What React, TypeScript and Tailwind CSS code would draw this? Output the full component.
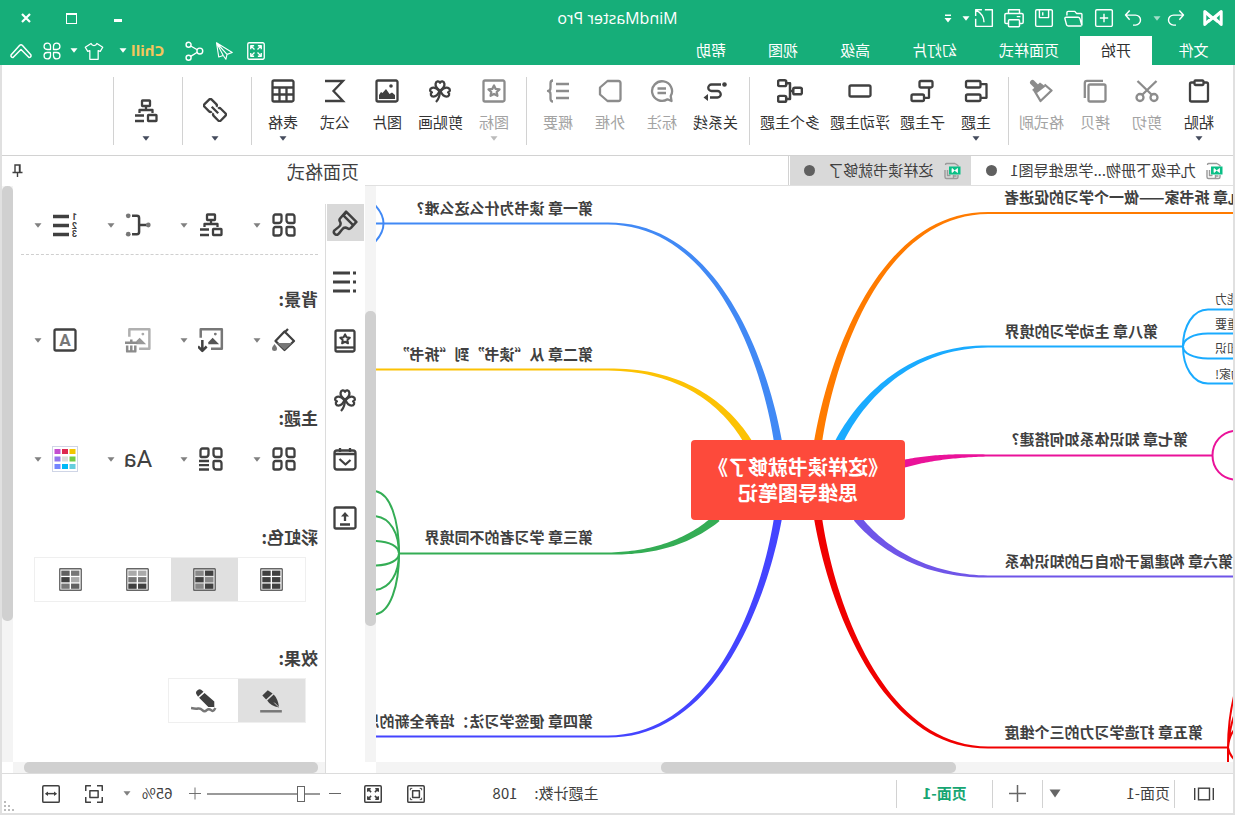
import type { ReactNode } from "react";

/* ---------- icon primitives ---------- */

function Svg({ size = 24, sw = 2.3, children }: { size?: number; sw?: number; children: ReactNode }) {
  return (
    <svg
      width={size}
      height={size}
      viewBox="0 0 24 24"
      fill="none"
      stroke="currentColor"
      strokeWidth={sw}
      strokeLinejoin="round"
      className="shrink-0"
      aria-hidden="true"
    >
      {children}
    </svg>
  );
}

function Caret({ className = "" }: { className?: string }) {
  return (
    <svg width="8" height="5" viewBox="0 0 8 5" fill="currentColor" className={`shrink-0 ${className}`} aria-hidden="true">
      <path d="M0.500 0.300h7L4 4.700z" />
    </svg>
  );
}

const star = "M12 6.500l1.700 3.400 3.800.5-2.800 2.600.7 3.800-3.400-1.800-3.400 1.800.7-3.800-2.800-2.600 3.800-.5z";
const heart = "M12 11.600C8.600 9.200 7.200 7 7.600 4.700 8.100 2 10.900 1.500 12 3.800 13.100 1.500 15.900 2 16.400 4.700 16.800 7 15.400 9.200 12 11.600z";
const leaf = "M3.500 1.500h5q1 0 1 1v4.500q0 3-3 3H2.500q-1 0-1-1V4Q1.500 1.500 3.500 1.500z";

const icons = {
  paste: (
    <Svg>
      <path d="M7 3.500H4.500q-1.500 0-1.500 1.500v16q0 1.500 1.500 1.500h15q1.500 0 1.500-1.500V5q0-1.500-1.500-1.500H17" />
      <rect x="7.500" y="1.500" width="9" height="4.500" rx="1" />
    </Svg>
  ),
  cut: (
    <Svg>
      <circle cx="5" cy="18.500" r="3.500" />
      <circle cx="19" cy="18.500" r="3.500" />
      <path d="M2.500 2L17 16M21.500 2L7 16" />
    </Svg>
  ),
  copy: (
    <Svg>
      <rect x="1.500" y="5.500" width="17" height="17" rx="1.500" />
      <path d="M4 1.800h16q2.200 0 2.200 2.200v15" />
    </Svg>
  ),
  painter: (
    <Svg>
      <path d="M19 11l-6.500 11L1.500 11.500l7-6" />
      <path d="M7.500 7.500L13 3.500l8 7.500-5 3z" fill="currentColor" stroke="none" />
      <path d="M16.500 7.500l4-4" strokeWidth="5" strokeLinecap="round" />
    </Svg>
  ),
  topic: (
    <Svg>
      <rect x="7.500" y="2" width="14.500" height="6.500" rx="1.500" />
      <rect x="7.500" y="15.500" width="14.500" height="6.500" rx="1.500" />
      <path d="M7.500 5.200H1.500v13.600h6" />
    </Svg>
  ),
  subtopic: (
    <Svg>
      <rect x="1.500" y="2" width="13" height="6.500" rx="1.500" />
      <rect x="10" y="15.500" width="12.500" height="6.500" rx="1.500" />
      <path d="M5 8.500v10.300h5" />
    </Svg>
  ),
  floating: (
    <Svg>
      <rect x="1.500" y="6.500" width="21" height="11" rx="1.500" />
    </Svg>
  ),
  multi: (
    <Svg size={26}>
      <rect x="1" y="9" width="8" height="6" rx="1.500" />
      <rect x="15.500" y="2" width="7.500" height="5.500" rx="1.500" />
      <rect x="15.500" y="16.500" width="7.500" height="5.500" rx="1.500" />
      <path d="M9 12h3M15.500 4.800H12v14.500h3.500" />
    </Svg>
  ),
  relation: (
    <Svg>
      <path d="M6 5.500h9.500a3.200 3.200 0 0 1 0 6.500h-6a3.200 3.200 0 0 0 0 6.500H17" />
      <circle cx="2.500" cy="5.500" r="2.300" fill="currentColor" stroke="none" />
      <path d="M19 15l4.500 3.500-4.500 3.500z" fill="currentColor" stroke="none" />
    </Svg>
  ),
  callout: (
    <Svg>
      <path d="M6.500 20.300L2.500 22l.8-5A10 9.800 0 1 1 6.500 20.300z" />
      <path d="M8 9.500h8.500M8 14h8.500" />
    </Svg>
  ),
  boundary: (
    <Svg>
      <path d="M3.500 2h11l7.500 6.500v7L14.500 22h-11Q1.500 22 1.500 20V4q0-2 2-2z" />
    </Svg>
  ),
  summary: (
    <Svg>
      <path d="M1 5h13M1 12h13M1 19h13" />
      <path d="M17 1.500c2.500 0 2.500 1.500 2.500 3v4c0 2 .8 3.500 2.500 3.500-1.700 0-2.500 1.500-2.500 3.500v4c0 1.500 0 3-2.500 3" />
    </Svg>
  ),
  mark: (
    <Svg>
      <rect x="1.500" y="1.500" width="21" height="21" rx="1.500" />
      <path d={star} />
    </Svg>
  ),
  clover: (
    <Svg>
      <path d={heart} />
      <path d={heart} transform="rotate(-100 12 12)" />
      <path d={heart} transform="rotate(100 12 12)" />
      <path d="M12 11c0 5 1 9 4 12" />
    </Svg>
  ),
  image: (
    <Svg>
      <rect x="1.500" y="1.500" width="21" height="21" rx="1.500" />
      <path d="M4 20v-4l3-2.500 2.500 1.500 3.500-5 3.500 4 1.500-1 2 3v4z" fill="currentColor" stroke="none" />
      <circle cx="8" cy="7" r="1.800" fill="currentColor" stroke="none" />
    </Svg>
  ),
  formula: (
    <Svg>
      <path d="M22 2H4L13.500 12 4 22h18" strokeLinejoin="miter" />
    </Svg>
  ),
  table: (
    <Svg>
      <rect x="1.500" y="1.500" width="21" height="21" rx="1.500" />
      <path d="M1.500 8.500h21M1.500 15.500h21M8.500 8.500v14M15.500 8.500v14" />
    </Svg>
  ),
  link: (
    <Svg size={24} sw={2.500}>
      <g transform="translate(1 1) scale(0.920) rotate(-45 12 12)">
        <path d="M10.500 15.500q0 2-2 2H1.500q-2 0-2-2v-7q0-2 2-2h7q2 0 2 2" />
        <path d="M13.500 8.500q0-2 2-2h7q2 0 2 2v7q0 2-2 2h-7q-2 0-2-2" />
        <path d="M7 12h10" />
      </g>
    </Svg>
  ),
  org: (
    <Svg>
      <rect x="8" y="1.500" width="8" height="5.500" rx="0.500" />
      <path d="M12 7v3.500M5.500 14v-3h13v3" />
      <rect x="1.500" y="16" width="8.500" height="6" rx="0.500" />
      <path d="M14 16.500h9M14 22h9" />
    </Svg>
  ),
  brush: (
    <Svg size={26}>
      <path d="M11 1.500L1.500 11l5 5.500q1.500 1.500 3 .5c2.200-1.300 4-.6 5.200 1l3 3.800a2.500 2.500 0 0 0 4-3l-4-3.200c-1.600-1.300-2.200-3-1-5q1-1.500-.3-3z" />
      <path d="M4.500 14L14 4.500M10.500 2l3 3" />
    </Svg>
  ),
  list: (
    <Svg>
      <path d="M7 3h17M7 12h17M7 21h17" strokeWidth="3.200" />
      <path d="M1 3h3M1 12h3M1 21h3" strokeWidth="3.200" />
    </Svg>
  ),
  book: (
    <Svg>
      <rect x="2.500" y="1.500" width="19" height="21" rx="1.500" />
      <path d="M2.500 18.500h19" />
      <path d={star} transform="translate(1.500 -0.300) scale(0.870)" />
    </Svg>
  ),
  calendar: (
    <Svg>
      <rect x="1.500" y="3.500" width="21" height="19" rx="2.500" />
      <path d="M1.500 7h21M7 1v4M17 1v4M6.500 13l5 4.500 6-5.500" />
    </Svg>
  ),
  upload: (
    <Svg>
      <rect x="1.500" y="1.500" width="21" height="21" rx="1.500" />
      <path d="M12 8v7M7 18.500h10" />
      <path d="M8 10.500L12 6l4 4.500z" fill="currentColor" stroke="none" />
    </Svg>
  ),
  leaves: (
    <Svg>
      <path d={leaf} />
      <path d={leaf} transform="matrix(-1 0 0 1 24 0)" />
      <path d={leaf} transform="translate(0 12.500)" />
      <path d={leaf} transform="matrix(-1 0 0 1 24 12.500)" />
    </Svg>
  ),
  leavesList: (
    <Svg>
      <path d={leaf} />
      <path d={leaf} transform="matrix(-1 0 0 1 24 0)" />
      <path d={leaf} transform="translate(0 12.500)" />
      <path d="M14 14h10M14 18.200h10M14 22.500h10" />
    </Svg>
  ),
  branch: (
    <Svg size={26}>
      <path d="M4 12h7M17.500 3.500H13q-2 0-2 2v13q0 2 2 2h4.500" />
      <g fill="#777" stroke="none">
        <circle cx="2.500" cy="12" r="2.200" />
        <circle cx="21" cy="3.500" r="2.200" />
        <circle cx="21" cy="20.500" r="2.200" />
      </g>
    </Svg>
  ),
  numbered: (
    <Svg>
      <path d="M8 3.500h16M8 12.500h16M8 21.500h16" strokeWidth="3.500" />
      <g fill="currentColor" stroke="none" fontSize="9" fontWeight="700" fontFamily="Roboto, sans-serif">
        <text x="0" y="6.500">1</text>
        <text x="0" y="15.500">2</text>
        <text x="0" y="24">3</text>
      </g>
    </Svg>
  ),
  bucket: (
    <Svg>
      <path d="M8 1l3.500 3.500M11.500 3.500L2 13l9.500 9 9-9z" />
      <path d="M4 15l7.500 7 7.500-7z" fill="#777" stroke="none" />
      <path d="M21.500 16q-2.500 3-2.500 4.500a2.500 2.500 0 0 0 5 0q0-1.500-2.500-4.500z" fill="#777" stroke="none" />
    </Svg>
  ),
  imageDown: (
    <Svg size={26}>
      <path d="M12 20H2V2h19.500v8" stroke="#777" />
      <path d="M4.500 16l6-6 4 4v2z" fill="#555" stroke="none" />
      <circle cx="8" cy="6.500" r="1.300" fill="#777" stroke="none" />
      <path d="M20 12v10M16 18l4 4 4-4" />
    </Svg>
  ),
  imageTrash: (
    <Svg size={26}>
      <path d="M11 20H1.500V2H20v7" stroke="#b0b0b0" />
      <path d="M4.500 16l6-6 3 3v3z" fill="#999" stroke="none" />
      <circle cx="7.500" cy="6.500" r="1.300" fill="#aaa" stroke="none" />
      <path d="M12.500 14.500h11.500M18.200 11.500v2M14.500 17v5.500h7.500V17M18.200 17v5" stroke="#8c8c8c" />
    </Svg>
  ),
  letter: (
    <Svg>
      <rect x="1.500" y="1.500" width="21" height="21" rx="1.500" />
      <text x="12" y="18" textAnchor="middle" fontSize="17" fontWeight="700" fontFamily="Roboto, sans-serif" fill="#777" stroke="none">A</text>
    </Svg>
  ),
  pen: (
    <Svg size={26}>
      <path d="M15 2l5 5-3.500 3.500-6-5.500z" fill="currentColor" stroke="none" />
      <path d="M9.500 6l6 5.500q-3 5-11 6.500 1-8 5-12z" fill="currentColor" stroke="none" />
      <path d="M4.500 18l4.500-4.500" stroke="#e0e0e0" strokeWidth="0.800" />
      <path d="M2 21.500h20" stroke="#777" />
    </Svg>
  ),
  pencil: (
    <Svg size={26}>
      <path d="M13.500 2.500a3 3 0 0 1 5 4L17.500 8 12.500 3.500zM11.500 4.500l5 4.500L8 17.500H2.500v-5z" fill="currentColor" stroke="none" />
      <path d="M1.500 18.500q2 4 4 2t4 0 4 0 4-1.500 6.500-.5" stroke="#777" />
    </Svg>
  ),
};

/* ---------- title bar ---------- */

function Tool({ label, className = "", children }: { label: string; className?: string; children: ReactNode }) {
  return (
    <button type="button" aria-label={label} className={`flex shrink-0 items-center justify-center ${className}`}>
      {children}
    </button>
  );
}

function TitleBar() {
  return (
    <div className="grid h-9 grid-cols-[1fr_auto_1fr] items-center">
      <div className="flex h-full items-center pl-3">
        <svg width="20" height="18" viewBox="0 0 20 18" fill="none" stroke="white" strokeWidth="3" strokeLinejoin="round" aria-hidden="true">
          <path d="M1.800 2.500v13L8.500 9zM18.200 2.500v13L11.500 9z" />
          <path d="M2 2.500l13 10.500M18 2.500L5 13" strokeWidth="2.500" />
        </svg>
        <Tool label="撤销" className="ml-[17px] w-5">
          <Svg size={20} sw={1.700}><path d="M8 3L3 8.500 8 14M3.500 8.500H15a6 6 0 0 1 0 12h-3" /></Svg>
        </Tool>
        <Caret className="ml-[5px] opacity-60" />
        <Tool label="恢复" className="ml-[10px] w-5">
          <Svg size={20} sw={1.700}><path d="M16 3l5 5.500-5 5.500M20.500 8.500H9a6 6 0 0 0 0 12h3" /></Svg>
        </Tool>
        <div className="ml-[9px] flex items-center gap-[10px]">
          <Tool label="新建" className="w-5">
            <Svg size={20} sw={1.700}><rect x="2" y="2" width="20" height="20" rx="1.500" /><path d="M12 7v10M7 12h10" /></Svg>
          </Tool>
          <Tool label="打开" className="w-5">
            <Svg size={20} sw={1.700}><path d="M2.500 21V7.500q0-1 1-1H9L11 4h8q1.500 0 1.500 1.500V9M2.500 21L5 12.500Q5.500 11 7 11h14.500q1.500 0 1.500 1.500L21 20q-.3 1.500-2 1.500H3" /></Svg>
          </Tool>
          <Tool label="保存" className="w-5">
            <Svg size={20} sw={1.700}><rect x="2" y="2" width="20" height="20" rx="1.500" /><path d="M6.500 2v9.500h11V2M13.500 5v4" /></Svg>
          </Tool>
          <Tool label="打印" className="w-5">
            <Svg size={22} sw={1.600}><path d="M6 7V3h12v4M6 18H3.500Q2 18 2 16.500v-8Q2 7 3.500 7h17Q22 7 22 8.500v8q0 1.500-1.500 1.500H18M5 10.500h4" /><rect x="6" y="14" width="12" height="7.500" rx="1" /></Svg>
          </Tool>
          <Tool label="导出" className="w-5">
            <Svg size={20} sw={1.700}><path d="M11 2H2v20h20V13M12 17C12 10 15 6 21.500 2.500M14.500 2H22v7.500" /></Svg>
          </Tool>
        </div>
        <Caret className="ml-1" />
        <svg width="8" height="9" viewBox="0 0 8 9" fill="currentColor" className="ml-[10px]" aria-hidden="true">
          <path d="M1 0.500h6v1.500H1zM0.500 4h7L4 8.500z" />
        </svg>
      </div>
      <h1 className="font-['Open_Sans',sans-serif] text-[16px]">MindMaster Pro</h1>
      <div className="flex h-full items-center justify-end pr-[3px]">
        <Tool label="最小化" className="h-8 w-[46px] pt-1"><span className="h-[3px] w-2 bg-white" /></Tool>
        <Tool label="最大化" className="h-8 w-[46px]"><span className="size-[11px] border border-t-2 border-white" /></Tool>
        <Tool label="关闭" className="h-8 w-[46px]">
          <svg width="10" height="10" viewBox="0 0 10 10" stroke="white" strokeWidth="2.200" aria-hidden="true"><path d="M1 1l8 8M9 1L1 9" /></svg>
        </Tool>
      </div>
    </div>
  );
}

const menus = ["页面样式", "幻灯片", "高级", "视图", "帮助"];

function MenuBar() {
  return (
    <div className="flex h-[29px] text-[15px]">
      <nav className="flex">
        <button type="button" className="w-[83px]">文件</button>
        <button type="button" aria-current="page" className="bg-white px-[21px] text-[#303030]">开始</button>
        {menus.map((m) => (
          <button type="button" key={m} className="px-[21px]">{m}</button>
        ))}
      </nav>
      <div className="ml-auto flex items-center pr-[10px]">
        <Tool label="全屏" className="mr-[14px]">
          <Svg size={18} sw={1.800}><rect x="1" y="1" width="22" height="22" rx="2" /><path d="M10 10L5.500 5.500M5 9.500V5h4.500M14 10l4.500-4.500M14.500 5H19v4.500M10 14l-4.500 4.500M5 14.500V19h4.500M14 14l4.500 4.500M14.500 19H19v-4.500" /></Svg>
        </Tool>
        <Tool label="发送" className="mr-[11px]">
          <Svg size={18} sw={1.500}><path d="M22 1L1 14l7 2.500L9.500 23l3.500-5 6 2zM22 1L8 16.500M22 1l-9 17" /></Svg>
        </Tool>
        <Tool label="分享" className="mr-5">
          <Svg size={20} sw={1.700}><circle cx="5" cy="12" r="3.500" /><circle cx="18.500" cy="4.500" r="3" /><circle cx="18.500" cy="20" r="3" /><path d="M8 10.500l8-4.500M8 13.500l8 5" /></Svg>
        </Tool>
        <button type="button" className="flex items-center gap-1">
          <span className="font-['Open_Sans',sans-serif] text-[15px] font-bold text-[#f6c65b]">Chill</span>
          <Caret />
        </button>
        <Tool label="皮肤" className="ml-[15px] gap-[6px]">
          <Svg size={20} sw={1.500}><path d="M8.500 3L1.500 7.500l3 5L7 11.500V22h10V11.500l2.500 1 3-5L15.500 3q-1 2.500-3.500 2.500T8.500 3z" /></Svg>
          <Caret />
        </Tool>
        <Tool label="应用" className="ml-[9px]">
          <Svg size={18} sw={1.700}>
            <path d="M10 10H5.500A4.300 4.300 0 1 1 10 5.500zM14 10h4.500A4.300 4.300 0 1 0 14 5.500zM10 14H5.500A4.300 4.300 0 1 0 10 18.500zM14 14h4.500A4.300 4.300 0 1 1 14 18.500z" />
          </Svg>
        </Tool>
        <Tool label="收起功能区" className="ml-[11px]">
          <svg width="22" height="16" viewBox="0 0 22 16" fill="none" stroke="white" strokeWidth="1.500" strokeLinejoin="round" strokeLinecap="round" aria-hidden="true">
            <path d="M1 12L9.500 2.500q1.500-1.500 3 0L21 12q.3 2.500-2 2.500L11 6.500 3 14.500Q.7 14.500 1 12z" />
          </svg>
        </Tool>
      </div>
    </div>
  );
}

/* ---------- ribbon ---------- */

type RibbonEntry = { label: string; icon: ReactNode; off?: boolean; drop?: boolean };

const ribbon: { pad: string; items: RibbonEntry[] }[] = [
  {
    pad: "pl-2 pr-[5px]",
    items: [
      { label: "粘贴", icon: icons.paste, drop: true },
      { label: "剪切", icon: icons.cut, off: true },
      { label: "拷贝", icon: icons.copy, off: true },
      { label: "格式刷", icon: icons.painter, off: true },
    ],
  },
  {
    pad: "pl-[6px] pr-[5px]",
    items: [
      { label: "主题", icon: icons.topic, drop: true },
      { label: "子主题", icon: icons.subtopic },
      { label: "浮动主题", icon: icons.floating },
      { label: "多个主题", icon: icons.multi },
    ],
  },
  {
    pad: "pl-[6px] pr-[5px]",
    items: [
      { label: "关系线", icon: icons.relation },
      { label: "标注", icon: icons.callout, off: true },
      { label: "外框", icon: icons.boundary, off: true },
      { label: "概要", icon: icons.summary, off: true },
    ],
  },
  {
    pad: "pl-[6px] pr-[5px]",
    items: [
      { label: "图标", icon: icons.mark, off: true, drop: true },
      { label: "剪贴画", icon: icons.clover },
      { label: "图片", icon: icons.image },
      { label: "公式", icon: icons.formula },
      { label: "表格", icon: icons.table, drop: true },
    ],
  },
];

function Ribbon() {
  return (
    <div className="flex h-[91px] border-b border-[#d2d2d2] pt-3 pb-[10px]">
      {ribbon.map((group, i) => (
        <div key={i} className={`flex border-r border-[#d2d2d2] ${group.pad}`}>
          {group.items.map((it) => (
            <button
              type="button"
              key={it.label}
              disabled={it.off}
              className={`flex min-w-[52px] flex-col items-center px-[5px] pt-[2px] ${it.off ? "text-[#8c8c8c]" : "text-[#404040]"}`}
            >
              <span className="flex h-6 items-center">{it.icon}</span>
              <span className={`mt-[7px] text-[15px] leading-6 whitespace-nowrap ${it.off ? "text-[#a3a3a3]" : "text-[#333]"}`}>{it.label}</span>
              {it.drop && <Caret className={it.off ? "mt-[2px] text-[#bbb]" : "mt-[2px] text-[#444b5c]"} />}
            </button>
          ))}
        </div>
      ))}
      <button type="button" aria-label="超链接" className="flex w-[69px] flex-col items-center border-r border-[#d2d2d2] pt-[21px] pl-1 text-[#404040]">
        {icons.link}
        <Caret className="mt-[14px] text-[#444b5c]" />
      </button>
      <button type="button" aria-label="布局" className="flex w-[69px] flex-col items-center border-r border-[#d2d2d2] pt-[22px] pl-1 text-[#404040]">
        {icons.org}
        <Caret className="mt-[13px] text-[#444b5c]" />
      </button>
    </div>
  );
}

/* ---------- documents ---------- */

function DocIcon() {
  return (
    <svg width="18" height="18" viewBox="0 0 18 18" fill="none" className="shrink-0" aria-hidden="true">
      <path d="M6 1.500h8.500q1 0 1 1.500M3 4.500v-1L6 1.500M16 8v7q0 1.500-1.500 1.500h-10q-1.500 0-1.500-1.500v-2M13.500 8v5.500h-3M7.500 13v3M4.500 14h3" stroke="#9a9a9a" strokeWidth="1.400" />
      <rect x="0.500" y="4.500" width="11.500" height="8" fill="#0abf86" />
      <path d="M3.500 6.500v4l2.500-2zM9 6.500v4l-2.500-2z" fill="#fff" stroke="#fff" strokeWidth="0.800" />
    </svg>
  );
}

function DocTabs() {
  return (
    <div className="flex h-[30px] border-b border-[#e0e0e0] text-[15px] text-[#404040]">
      <button type="button" className="flex items-center pr-[15px] pl-[10px]">
        <DocIcon />
        <span className="ml-[9px]">九年级下册物...学思维导图1</span>
        <span className="ml-[13px] size-[11px] rounded-full bg-[#606060]" />
      </button>
      <button type="button" aria-current="page" className="flex items-center bg-[#d9d9d9] pr-[14px] pl-[10px]">
        <DocIcon />
        <span className="ml-[10px]">这样读书就够了</span>
        <span className="ml-[13px] size-[11px] rounded-full bg-[#606060]" />
      </button>
      <span className="ml-px w-px bg-[#d2d2d2]" />
    </div>
  );
}

/* ---------- mind map ---------- */

type Pt = [number, number];
type Branch = { color: string; p: [Pt, Pt, Pt, Pt]; to: number };

const branches: Branch[] = [
  { color: "#ff7b00", p: [[415, 256], [402, 174], [353, 27], [245, 27]], to: -10 },
  { color: "#1aabff", p: [[394, 256], [375, 218], [328, 160.5], [245, 160.5]], to: 50 },
  { color: "#ea1299", p: [[332, 278.5], [305, 271.5], [278, 269.5], [245, 269.5]], to: 20 },
  { color: "#6f55e8", p: [[376, 332], [352, 362], [308, 390.5], [245, 390.5]], to: -10 },
  { color: "#f00000", p: [[415, 332], [402, 414], [353, 561.5], [245, 561.5]], to: 5 },
  { color: "#4189f5", p: [[455, 256], [468, 177], [516, 37.5], [625, 37.5]], to: 2000 },
  { color: "#fcc204", p: [[485, 256], [503, 226], [543, 183.5], [625, 183.5]], to: 2000 },
  { color: "#34ad55", p: [[516, 332], [543, 355], [578, 367.5], [625, 367.5]], to: 834 },
  { color: "#4444ff", p: [[455, 332], [468, 409], [516, 550.5], [625, 550.5]], to: 2000 },
];

/* Outline of a cubic curve whose width runs from 8px down to 2px. */
function taper([a, b, c, d]: [Pt, Pt, Pt, Pt]) {
  const left: string[] = [];
  const right: string[] = [];
  const n = 40;
  for (let i = 0; i <= n; i++) {
    const t = i / n;
    const s = 1 - t;
    const at = (k: 0 | 1) => s * s * s * a[k] + 3 * s * s * t * b[k] + 3 * s * t * t * c[k] + t * t * t * d[k];
    const dt = (k: 0 | 1) => 3 * s * s * (b[k] - a[k]) + 6 * s * t * (c[k] - b[k]) + 3 * t * t * (d[k] - c[k]);
    const len = Math.hypot(dt(0), dt(1)) || 1;
    const h = 4 - 3 * t;
    const nx = (-dt(1) / len) * h;
    const ny = (dt(0) / len) * h;
    left.push(`${(at(0) + nx).toFixed(2)} ${(at(1) + ny).toFixed(2)}`);
    right.unshift(`${(at(0) - nx).toFixed(2)} ${(at(1) - ny).toFixed(2)}`);
  }
  return `M${left.join("L")}L${right.join("L")}Z`;
}

const greenEnds = [305, 330, 355, 379.5, 404, 428.5];
const blueEnds = [123.5, 147.5, 172.5, 197.5];

const topics = [
  { text: "第九章 拆书家——做一个学习的促进者", x: -25, y: 11 },
  { text: "第八章 主动学习的境界", x: 75, y: 145 },
  { text: "第七章 知识体系如何搭建?", x: 45, y: 253 },
  { text: "第六章 构建属于你自己的知识体系", x: 0, y: 375 },
  { text: "第五章 打造学习力的三个维度", x: 30, y: 546 },
  { text: "第一章 读书为什么这么难?", x: 640, y: 22 },
  { text: "第二章 从“读书”到“拆书”", x: 640, y: 168 },
  { text: "第三章 学习者的不同境界", x: 640, y: 351 },
  { text: "第四章 便签学习法：培养全新的思维", x: 640, y: 535 },
];

const notes = [
  { text: "学习能力", y: 113 },
  { text: "更重要", y: 138 },
  { text: "用知识", y: 162 },
  { text: "成功家!", y: 188 },
];

function MindMap() {
  return (
    <div className="relative min-w-0 flex-1 overflow-hidden bg-white">
      <svg className="absolute inset-0 size-full" fill="none" strokeWidth="2" aria-hidden="true">
        {branches.map((b) => (
          <g key={b.color}>
            <path d={taper(b.p)} fill={b.color} />
            <path d={`M${b.p[3][0]} ${b.p[3][1]}H${b.to}`} stroke={b.color} />
          </g>
        ))}
        {greenEnds.map((y) => (
          <path key={y} d={`M834 367.500C834 ${(367.5 + y) / 2} 842 ${y} 860 ${y}`} stroke="#34ad55" />
        ))}
        {blueEnds.map((y) => (
          <path key={y} d={`M50 160.500C50 ${160.5 + (y - 160.5) * 0.55} 40 ${y} 25 ${y}H-5`} stroke="#1aabff" />
        ))}
        <path d="M-4 244.500C12 245.500 20.500 257 20.500 269.500S12 293 -4 294" stroke="#ea1299" />
        <path d="M859 18C853 24 849.500 30 849.500 37.500S853 51 859 57" stroke="#4189f5" />
        <path d="M-1 510Q5 535 5 561.500M-1 530Q3.500 543 5 561.500M-1 544Q4 550 5 561.500V580M5 561.500Q4 568 -1 573" stroke="#f00000" />
      </svg>
      {topics.map((t) => (
        <span
          key={t.text}
          className="absolute -translate-y-1/2 text-[15px] leading-6 font-bold whitespace-nowrap text-[#404040]"
          style={{ left: t.x, top: t.y }}
        >
          {t.text}
        </span>
      ))}
      {notes.map((t) => (
        <span
          key={t.text}
          className="absolute -left-12 w-[66px] -translate-y-1/2 text-right text-[12px] leading-4 whitespace-nowrap text-[#404040]"
          style={{ top: t.y }}
        >
          {t.text}
        </span>
      ))}
      <div className="absolute top-[254px] left-[328px] flex h-20 w-[214px] items-center justify-center rounded bg-[#fd4a3b] text-center text-[20px] leading-[26px] font-bold text-white">
        <p>
          《这样读书就够了》
          <br />
          思维导图笔记
        </p>
      </div>
    </div>
  );
}

function ScrollBar({ vertical, start, length }: { vertical?: boolean; start: number; length: number }) {
  return vertical ? (
    <div className="w-[11px] shrink-0 bg-[#f4f4f4]">
      <div style={{ height: `${start}%` }} />
      <div className="rounded-[5px] bg-[#d0d0d0]" style={{ height: `${length}%` }} />
    </div>
  ) : (
    <div className="flex h-[11px] flex-1 bg-[#f4f4f4]">
      <div style={{ width: `${start}%` }} />
      <div className="rounded-[5px] bg-[#d0d0d0]" style={{ width: `${length}%` }} />
    </div>
  );
}

/* ---------- format panel ---------- */

function Swatches({ rows, on }: { rows: [string, string][]; on?: boolean }) {
  return (
    <svg width="23" height="23" viewBox="0 0 22 22" aria-hidden="true">
      <rect x="0.700" y="0.700" width="20.600" height="20.600" rx="0.500" fill={on ? "#e0e0e0" : "#fff"} stroke="#666" strokeWidth="1.300" />
      {rows.map(([a, b], i) => (
        <g key={i}>
          <rect x="2.500" y={2.5 + i * 6.2} width="8" height="5" fill={a} />
          <rect x="11.800" y={2.5 + i * 6.2} width="8" height="5" fill={b} />
        </g>
      ))}
    </svg>
  );
}

const palette = ["#f2c500", "#dd2850", "#c44fd0", "#74cc44", "#dcdcdc", "#9277ec", "#66cede", "#00b9f7", "#7486ff"];

const paletteIcon = (
  <svg width="26" height="26" viewBox="0 0 26 26" className="shrink-0" aria-hidden="true">
    <rect x="0.500" y="0.500" width="25" height="25" fill="#fff" stroke="#cfd5e6" />
    {palette.map((c, i) => (
      <rect key={c} x={2.5 + (i % 3) * 7.5} y={3 + Math.floor(i / 3) * 7.5} width="6" height="5" fill={c} />
    ))}
  </svg>
);

const fontIcon = <span className="font-[Roboto,sans-serif] text-[24px] leading-none">Aa</span>;

type Cell = { label: string; icon: ReactNode; drop?: boolean };

function IconRow({ cells }: { cells: Cell[] }) {
  return (
    <div className="flex h-9 pl-[22px] text-[#404040]">
      {cells.map((c) => (
        <button type="button" key={c.label} aria-label={c.label} className="flex w-[73px] shrink-0 items-center last:w-[52px]">
          <span className="flex w-6 shrink-0 items-center justify-center">{c.icon}</span>
          {c.drop !== false && <Caret className="ml-[11px] text-[#808080]" />}
        </button>
      ))}
    </div>
  );
}

function Label({ className, children }: { className: string; children: ReactNode }) {
  return <h3 className={`text-[17px] leading-6 font-bold text-[#404040] ${className}`}>{children}</h3>;
}

function Segment({ cells }: { cells: { label: string; icon: ReactNode; on?: boolean }[] }) {
  return (
    <div className="mt-2 ml-3 flex h-[45px] w-fit border border-[#efefef] pr-[2px] text-[#404040]">
      {cells.map((c) => (
        <button
          type="button"
          key={c.label}
          aria-label={c.label}
          aria-pressed={!!c.on}
          className={`flex w-[67px] items-center justify-center ${c.on ? "bg-[#e0e0e0]" : ""}`}
        >
          {c.icon}
        </button>
      ))}
    </div>
  );
}

const sideTools = [
  { label: "页面格式", icon: icons.brush, on: true },
  { label: "大纲", icon: icons.list },
  { label: "图标库", icon: icons.book },
  { label: "剪贴画", icon: icons.clover },
  { label: "任务", icon: icons.calendar },
  { label: "上传", icon: icons.upload },
];

const D = "#404040";
const M = "#777777";

function FormatPanel() {
  return (
    <aside className="flex w-[363px] shrink-0 flex-col">
      <div className="flex h-[30px] items-center justify-between pr-[10px] pl-[6px]">
        <h2 className="text-[18px] text-[#404040]">页面格式</h2>
        <button type="button" aria-label="固定面板" className="text-[#404040]">
          <svg width="11" height="14" viewBox="0 0 11 14" fill="none" stroke="currentColor" strokeWidth="1.400" aria-hidden="true">
            <path d="M3 8V1h5v7M0.500 8.500h10M5.500 8.500V13M3.500 1v7" />
          </svg>
        </button>
      </div>
      <div className="flex min-h-0 flex-1">
        <div className="mt-[18px] flex w-10 flex-col items-center gap-[22px] border-r border-[#dcdcdc] text-[#404040]">
          {sideTools.map((t) => (
            <button
              type="button"
              key={t.label}
              aria-label={t.label}
              className={`flex size-[37px] items-center justify-center ${t.on ? "bg-[#d9d9d9]" : ""}`}
            >
              {t.icon}
            </button>
          ))}
        </div>
        <div className="flex min-w-0 flex-1 flex-col">
          <div className="flex min-h-0 flex-1">
            <div className="min-w-0 flex-1 overflow-hidden pt-[21px] pr-2 pl-[7px]">
              <IconRow
                cells={[
                  { label: "布局样式", icon: icons.leaves },
                  { label: "结构", icon: icons.org },
                  { label: "连接线", icon: icons.branch },
                  { label: "编号", icon: icons.numbered },
                ]}
              />
              <div className="mt-[11px] border-t border-dashed border-[#cfcfcf]" />
              <Label className="mt-8">背景:</Label>
              <div className="mt-[11px]">
                <IconRow
                  cells={[
                    { label: "背景颜色", icon: icons.bucket },
                    { label: "背景图片", icon: icons.imageDown },
                    { label: "删除背景图片", icon: icons.imageTrash, drop: false },
                    { label: "水印", icon: icons.letter },
                  ]}
                />
              </div>
              <Label className="mt-12">主题:</Label>
              <div className="mt-[11px]">
                <IconRow
                  cells={[
                    { label: "主题", icon: icons.leaves },
                    { label: "主题列表", icon: icons.leavesList },
                    { label: "主题字体", icon: fontIcon },
                    { label: "主题颜色", icon: paletteIcon },
                  ]}
                />
              </div>
              <Label className="mt-12">彩虹色:</Label>
              <Segment
                cells={[
                  { label: "彩虹色一", icon: <Swatches rows={[[D, D], [D, D], [D, D]]} /> },
                  { label: "彩虹色二", icon: <Swatches rows={[[D, "#888"], ["#888", D], [D, "#888"]]} on />, on: true },
                  { label: "彩虹色三", icon: <Swatches rows={[["#aaa", "#aaa"], [M, M], [D, D]]} /> },
                  { label: "彩虹色四", icon: <Swatches rows={[[M, "#606060"], ["#aaa", D], ["#606060", M]]} /> },
                ]}
              />
              <Label className="mt-11">效果:</Label>
              <Segment
                cells={[
                  { label: "常规", icon: icons.pen, on: true },
                  { label: "手绘", icon: icons.pencil },
                ]}
              />
            </div>
            <ScrollBar vertical start={0} length={75.5} />
          </div>
          <div className="flex pr-[11px]">
            <ScrollBar start={2.2} length={94.2} />
          </div>
        </div>
      </div>
    </aside>
  );
}

/* ---------- status bar ---------- */

function StatusBar() {
  return (
    <footer className="flex h-10 items-center border-t border-[#dcdcdc] text-[15px] text-[#404040]">
      <div className="flex h-7 items-center">
        <Tool label="页面列表" className="h-full w-[59px] border-r border-[#d2d2d2]">
          <svg width="20" height="14" viewBox="0 0 20 14" fill="none" stroke="currentColor" strokeWidth="1.400" aria-hidden="true">
            <path d="M0.700 1v12M19.300 1v12" />
            <rect x="4.500" y="1.200" width="11" height="11.600" />
          </svg>
        </Tool>
        <label className="flex h-full w-[132px] items-center border-r border-[#d2d2d2] pr-[6px] pl-1">
          <select aria-label="当前页面" className="min-w-0 flex-1 appearance-none bg-transparent outline-none">
            <option>页面-1</option>
          </select>
          <svg width="12" height="9" viewBox="0 0 12 9" fill="#666" aria-hidden="true"><path d="M0.500 0.500h11L6 8.500z" /></svg>
        </label>
        <Tool label="添加页面" className="h-full w-[50px] border-r border-[#d2d2d2]">
          <svg width="17" height="17" viewBox="0 0 17 17" stroke="#666" strokeWidth="1.500" aria-hidden="true"><path d="M8.500 0v17M0 8.500h17" /></svg>
        </Tool>
        <button type="button" className="h-full w-[96px] border-r border-[#d2d2d2] font-bold text-[#17a673]">页面-1</button>
      </div>
      <div className="ml-auto flex items-center pr-10">
        <span className="mr-[67px] whitespace-pre">主题计数:     108</span>
        <Tool label="适应窗口" className="mr-[25px]">
          <Svg size={18} sw={2}><rect x="1" y="1" width="22" height="22" rx="1.500" /><rect x="7.500" y="7.500" width="9" height="9" /><path d="M4.500 7V4.500H7M17 4.500h2.500V7M19.500 17v2.500H17M7 19.500H4.500V17" strokeWidth="1.300" /></Svg>
        </Tool>
        <Tool label="全屏" className="mr-[23px]">
          <Svg size={18} sw={2}><rect x="1" y="1" width="22" height="22" rx="1.500" /><path d="M9.500 9.500l-4-4M5 9V5h4M14.500 9.500l4-4M15 5h4v4M9.500 14.500l-4 4M5 15v4h4M14.500 14.500l4 4M15 19h4v-4" /></Svg>
        </Tool>
        <Tool label="缩小" className="mr-[9px] h-4 w-3"><span className="h-px w-3 bg-[#666]" /></Tool>
        <input
          type="range"
          aria-label="缩放"
          min={0}
          max={100}
          defaultValue={15}
          className="m-0 h-4 w-[113px] appearance-none bg-transparent [&::-webkit-slider-runnable-track]:h-[2px] [&::-webkit-slider-runnable-track]:bg-[#999] [&::-webkit-slider-thumb]:-mt-[7px] [&::-webkit-slider-thumb]:h-4 [&::-webkit-slider-thumb]:w-2 [&::-webkit-slider-thumb]:appearance-none [&::-webkit-slider-thumb]:border [&::-webkit-slider-thumb]:border-[#666] [&::-webkit-slider-thumb]:bg-white"
        />
        <Tool label="放大" className="mr-[17px] ml-[6px] w-3">
          <svg width="13" height="13" viewBox="0 0 13 13" stroke="#666" aria-hidden="true"><path d="M6.500 0v13M0 6.500h13" /></svg>
        </Tool>
        <button type="button" className="mr-5 flex items-center gap-[11px]">
          65%
          <Caret className="text-[#808080]" />
        </button>
        <Tool label="适应页面" className="mr-[25px]">
          <Svg size={18} sw={2}><path d="M1 8V1h7M16 1h7v7M23 16v7h-7M8 23H1v-7" /><rect x="6.500" y="7.500" width="11" height="9" /></Svg>
        </Tool>
        <Tool label="适应宽度">
          <Svg size={18} sw={2}><rect x="1" y="1" width="22" height="22" rx="1.500" /><path d="M5 11.500h14" /><path d="M8 8.500l-4 3 4 3zM16 8.500l4 3-4 3z" fill="currentColor" stroke="none" /></Svg>
        </Tool>
      </div>
      <svg width="11" height="11" viewBox="0 0 11 11" fill="#bbb" className="absolute right-[3px] bottom-[3px]" aria-hidden="true">
        <path d="M8 0h2v2H8zM8 4h2v2H8zM8 8h2v2H8zM4 4h2v2H4zM4 8h2v2H4zM0 8h2v2H0z" />
      </svg>
    </footer>
  );
}

/* The whole window is flipped left to right, text included. */
export default function App() {
  return (
    <div className="relative flex h-screen -scale-x-100 flex-col overflow-hidden bg-white font-['Noto_Sans_CJK_SC',sans-serif]">
      <header className="bg-[#16ae79] text-white">
        <TitleBar />
        <MenuBar />
      </header>
      <div className="flex min-h-0 flex-1 flex-col border-x-2 border-b-2 border-[#e0e0e0]">
        <Ribbon />
        <main className="flex min-h-0 flex-1">
          <section className="flex min-w-0 flex-1 flex-col">
            <DocTabs />
            <div className="flex min-h-0 flex-1">
              <MindMap />
              <ScrollBar vertical start={21.7} length={54.7} />
            </div>
            <div className="flex pr-[11px]">
              <ScrollBar start={32.3} length={34.5} />
            </div>
          </section>
          <FormatPanel />
        </main>
        <StatusBar />
      </div>
    </div>
  );
}
